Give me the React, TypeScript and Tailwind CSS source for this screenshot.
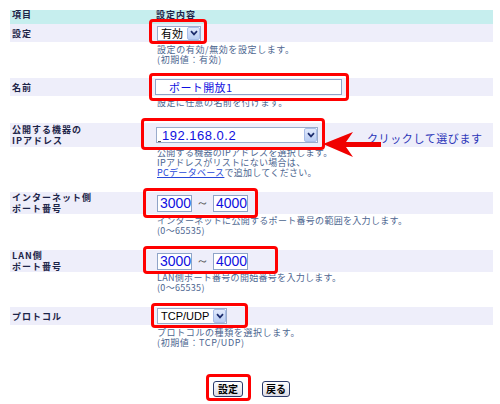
import React from 'react';

const jp = '[font-family:"Noto_Sans_CJK_JP",sans-serif]';

const Chevron = () => (
    <svg width="8" height="6" viewBox="0 0 8 6">
        <path d="M1 1.2 L4 4.4 L7 1.2" fill="none" stroke="#1c2c6c" strokeWidth="1.7" />
    </svg>
);

const DropBtn = () => (
    <span className="flex h-full w-[13px] shrink-0 items-center justify-center rounded-[2px] border border-[#a9bde8] bg-linear-to-b from-[#e2eafc] to-[#b9cdf3]">
        <Chevron />
    </span>
);

// red annotation frame drawn over a control
const Mark = ({ className }: { className: string }) => (
    <span className={`pointer-events-none absolute rounded-[4px] border-[3px] border-[#ff0000] ${className}`} />
);

const Label = ({ children }: { children: React.ReactNode }) => (
    <div className={`w-[147px] pl-[2px] text-[9px] leading-[11px] font-bold tracking-[1px] text-[#1c2448] ${jp}`}>
        {children}
    </div>
);

const Desc = ({ children, className }: { children: React.ReactNode; className: string }) => (
    <div className={`pl-[147px] text-[9px] leading-[10px] text-[#4d6690] ${jp} ${className}`}>{children}</div>
);

const PortRange = () => (
    <span className="flex items-center">
        <span className="flex h-[17px] w-[35px] items-center border border-[#8fa4c8] bg-white pl-[2px] text-[14px] text-[#1010e0] [font-family:'Liberation_Sans',sans-serif]">
            3000
        </span>
        <span className="mx-[4px] text-[13px] text-[#555] [font-family:'Liberation_Sans',sans-serif]">～</span>
        <span className="flex h-[17px] w-[35px] items-center border border-[#8fa4c8] bg-white pl-[2px] text-[14px] text-[#1010e0] [font-family:'Liberation_Sans',sans-serif]">
            4000
        </span>
    </span>
);

export default function App() {
    return (
        <div className="relative h-[404px] w-[500px] overflow-hidden bg-white">
            <div className="ml-[10px] w-[483px]">
                <div className={`mt-[10px] flex h-[14px] bg-[#c6eeee] text-[9px] leading-[9px] font-bold tracking-[1px] text-[#1c2448] ${jp}`}>
                    <div className="w-[146px] pl-[2px]">項目</div>
                    <div>設定内容</div>
                </div>

                {/* 設定 */}
                <div className="flex h-[18px] items-center bg-[#eeeefa]">
                    <Label>設定</Label>
                    <span className="relative flex h-[15px] w-[44px] items-center border border-[#9aaccc] bg-white">
                        <span className={`flex-1 pl-[3px] text-[11px] leading-none text-black ${jp}`}>有効</span>
                        <DropBtn />
                        <Mark className="-top-[8px] -right-[7px] -bottom-[4px] -left-[9px]" />
                    </span>
                </div>
                <Desc className="mt-[3px] mb-[13px] tracking-[0.6px]">
                    <div>設定の有効/無効を設定します。</div>
                    <div>(初期値：有効)</div>
                </Desc>

                {/* 名前 */}
                <div className="flex h-[18px] items-center bg-[#eeeefa]">
                    <Label>名前</Label>
                    <span className="relative -ml-[2px] flex h-[16px] w-[187px] items-center border border-[#8fa4c8] bg-white pl-[13px]">
                        <span className={`text-[11px] leading-none tracking-[0.4px] text-[#1010e0] ${jp}`}>ポート開放1</span>
                        <Mark className="-top-[7px] -right-[8px] -bottom-[7px] -left-[7px]" />
                    </span>
                </div>
                <Desc className="mt-[2px] mb-[15px] tracking-[0.4px]">
                    <div>設定に任意の名前を付けます。</div>
                </Desc>

                {/* IP */}
                <div className="flex h-[24px] items-center bg-[#eeeefa]">
                    <Label>
                        <div>公開する機器の</div>
                        <div>IPアドレス</div>
                    </Label>
                    <span className="relative -ml-[1px] flex h-[16px] w-[162px] items-center border border-[#9aaccc] bg-white">
                        <span className="flex flex-1 items-end pl-[1px] text-[13px] leading-none tracking-[0.5px] text-[#1010e0] [font-family:'Liberation_Sans',sans-serif]">
                            <span className="mr-[1px] inline-block h-[1px] w-[3px] bg-[#555]" />
                            192.168.0.2
                        </span>
                        <DropBtn />
                        <Mark className="-top-[10px] -right-[8px] -bottom-[8px] -left-[16px]" />
                    </span>
                    <span className={`mb-[2px] ml-[49px] self-end text-[11px] leading-[14px] tracking-[0.6px] text-[#2b35b8] ${jp}`}>
                        クリックして選びます
                    </span>
                </div>
                <Desc className="mt-[1px] mb-[14px] tracking-[0.3px]">
                    <div>公開する機器のIPアドレスを選択します。</div>
                    <div>IPアドレスがリストにない場合は、</div>
                    <div>
                        <span className="text-[#2848d8] underline">PCデータベース</span>で追加してください。
                    </div>
                </Desc>

                {/* インターネット側 */}
                <div className="flex h-[22px] items-center bg-[#eeeefa]">
                    <Label>
                        <div>インターネット側</div>
                        <div>ポート番号</div>
                    </Label>
                    <span className="relative">
                        <PortRange />
                        <Mark className="-top-[5px] -right-[10px] -bottom-[5px] -left-[14px]" />
                    </span>
                </div>
                <Desc className="mt-[2px] mb-[14px] text-[8px] tracking-[0.3px]">
                    <div>インターネットに公開するポート番号の範囲を入力します。</div>
                    <div>(0～65535)</div>
                </Desc>

                {/* LAN側 */}
                <div className="flex h-[22px] items-center bg-[#eeeefa]">
                    <Label>
                        <div>LAN側</div>
                        <div>ポート番号</div>
                    </Label>
                    <span className="relative">
                        <PortRange />
                        <Mark className="-top-[5px] -right-[30px] -bottom-[3px] -left-[14px]" />
                    </span>
                </div>
                <Desc className="mt-[1px] mb-[14px] text-[8px] tracking-[0.3px]">
                    <div>LAN側ポート番号の開始番号を入力します。</div>
                    <div>(0～65535)</div>
                </Desc>

                {/* プロトコル */}
                <div className="flex h-[18px] items-center bg-[#eeeefa]">
                    <Label>プロトコル</Label>
                    <span className="relative flex h-[16px] w-[70px] items-center border border-[#9aaccc] bg-white">
                        <span className="flex-1 pl-[3px] text-[11px] leading-none text-black [font-family:'Liberation_Sans',sans-serif]">TCP/UDP</span>
                        <DropBtn />
                        <Mark className="-top-[6px] -right-[22px] -bottom-[5px] -left-[7px]" />
                    </span>
                </div>
                <Desc className="mt-[3px] tracking-[0.6px]">
                    <div>プロトコルの種類を選択します。</div>
                    <div>(初期値：TCP/UDP)</div>
                </Desc>

                <div className="mt-[33px] flex justify-center gap-[19px]">
                    <button className={`relative h-[16px] w-[30px] rounded-[3px] border border-[#2a3a6a] bg-linear-to-b from-white to-[#dcdce6] text-[10px] leading-none font-bold text-black ${jp}`}>
                        設定
                        <Mark className="-top-[8px] -right-[9px] -bottom-[5px] -left-[8px]" />
                    </button>
                    <button className={`h-[16px] w-[28px] rounded-[3px] border border-[#2a3a6a] bg-linear-to-b from-white to-[#dcdce6] text-[10px] leading-none font-bold text-black ${jp}`}>
                        戻る
                    </button>
                </div>
            </div>

            {/* callout arrow */}
            <svg className="absolute top-[130px] left-[320px]" width="62" height="28" viewBox="0 0 62 28">
                <polygon points="3,14 33,2 26,12 61,12 61,17 26,17 33,27" fill="#f00000" />
            </svg>
        </div>
    );
}
